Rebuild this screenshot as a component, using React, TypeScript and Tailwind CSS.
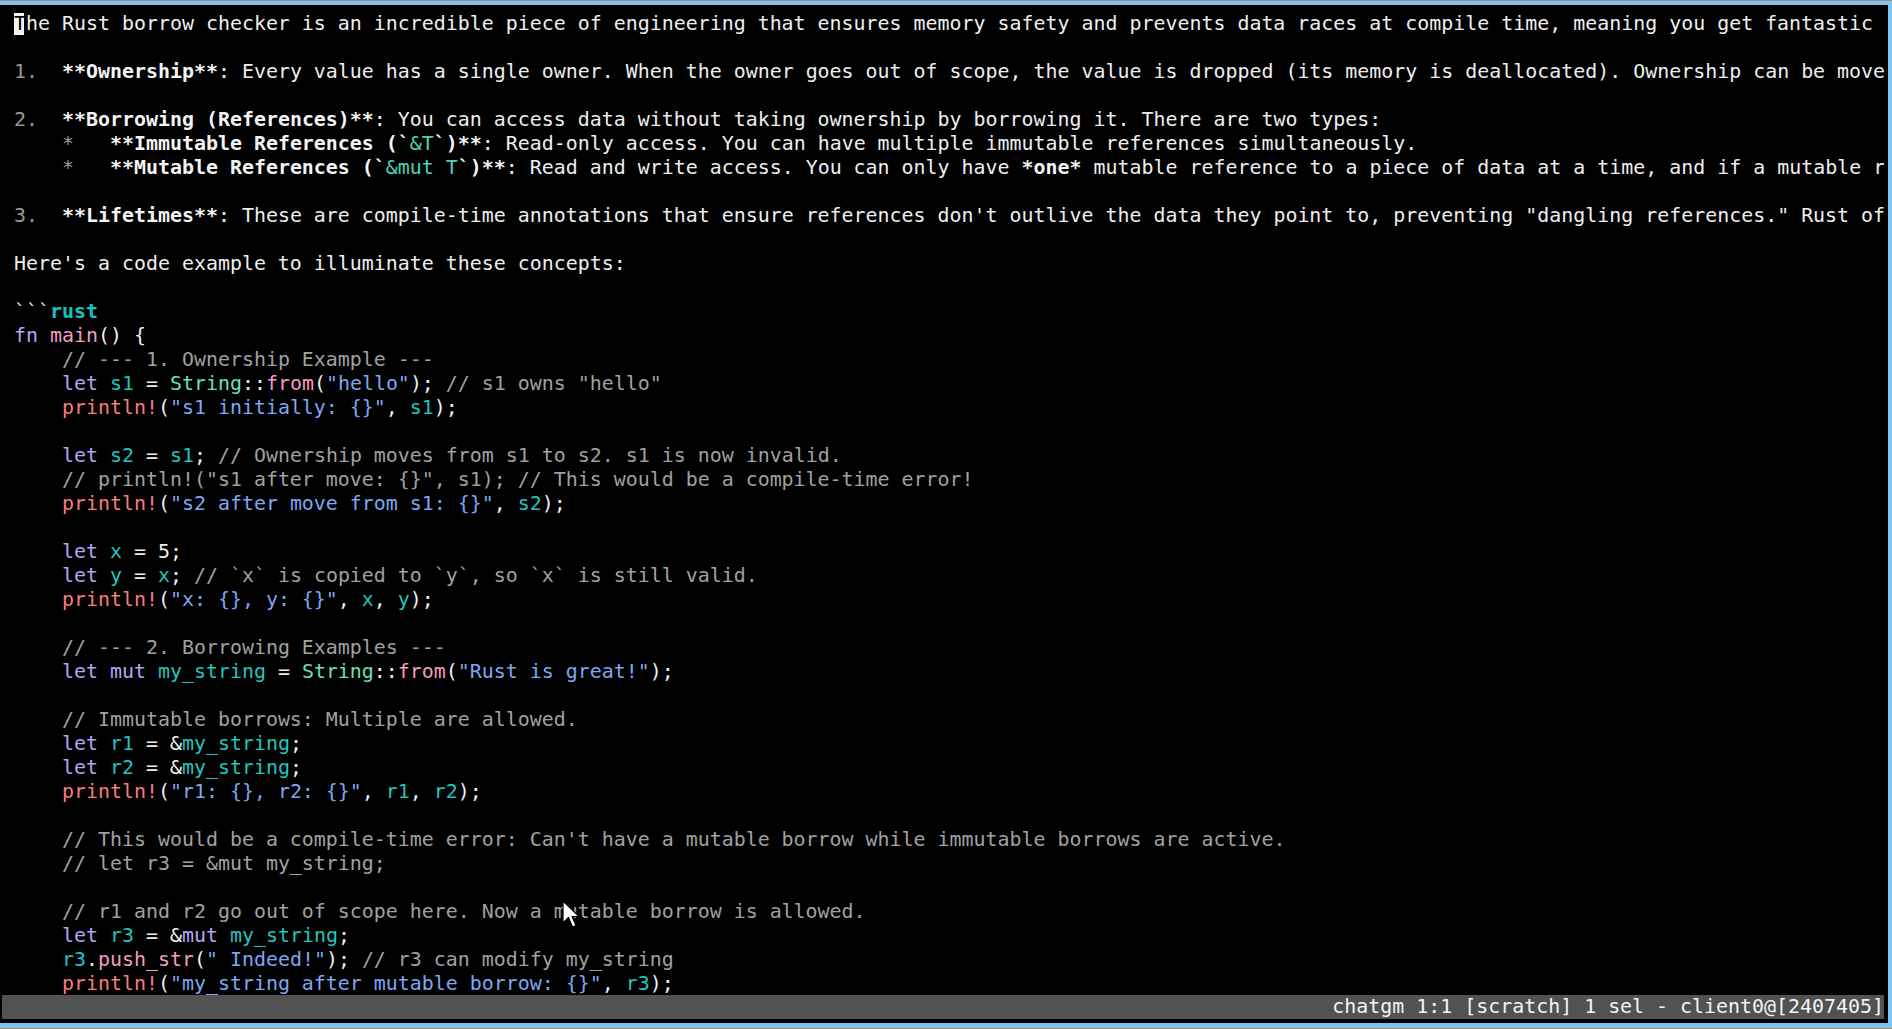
import React from "react";

type Seg = [string, keyof typeof C] | string;

const C = {
  t: "text-[#eeeeee]",
  g: "text-[#9a9a9a]",
  b: "font-bold text-[#f4f4f4]",
  tl: "text-[#4fd1b6]",
  kw: "text-[#b8a4f6]",
  v: "text-[#1fc4c0]",
  ty: "text-[#6be0b3]",
  fn: "text-[#f39bc2]",
  s: "text-[#7fa6f3]",
  c: "text-[#a0a0a0]",
  m: "text-[#f67b7b]",
  rs: "font-bold text-[#14c4c4]",
};

const lines: Seg[][] = [
  [
    ["The Rust borrow checker is an incredible piece of engineering that ensures memory safety and prevents data races at compile time, meaning you get fantastic performance without a garbage collector.", "t"],
  ],
  [],
  [
    ["1.", "g"],
    "  ",
    ["**Ownership**", "b"],
    ": Every value has a single owner. When the owner goes out of scope, the value is dropped (its memory is deallocated). Ownership can be moved from one variable to another.",
  ],
  [],
  [
    ["2.", "g"],
    "  ",
    ["**Borrowing (References)**", "b"],
    ": You can access data without taking ownership by borrowing it. There are two types:",
  ],
  [
    "    ",
    ["*", "g"],
    "   ",
    ["**Immutable References (`", "b"],
    ["&T", "tl"],
    ["`)**", "b"],
    ": Read-only access. You can have multiple immutable references simultaneously.",
  ],
  [
    "    ",
    ["*", "g"],
    "   ",
    ["**Mutable References (`", "b"],
    ["&mut T", "tl"],
    ["`)**", "b"],
    ": Read and write access. You can only have ",
    ["*one*", "b"],
    " mutable reference to a piece of data at a time, and if a mutable reference exists, no immutable references can exist.",
  ],
  [],
  [
    ["3.", "g"],
    "  ",
    ["**Lifetimes**", "b"],
    ': These are compile-time annotations that ensure references don\'t outlive the data they point to, preventing "dangling references." Rust often infers lifetimes automatically.',
  ],
  [],
  ["Here's a code example to illuminate these concepts:"],
  [],
  ["```", ["rust", "rs"]],
  [["fn", "kw"], " ", ["main", "fn"], "() {"],
  ["    ", ["// --- 1. Ownership Example ---", "c"]],
  [
    "    ",
    ["let", "kw"],
    " ",
    ["s1", "v"],
    " = ",
    ["String", "ty"],
    "::",
    ["from", "fn"],
    "(",
    ['"hello"', "s"],
    "); ",
    ['// s1 owns "hello"', "c"],
  ],
  ["    ", ["println!", "m"], "(", ['"s1 initially: {}"', "s"], ", ", ["s1", "v"], ");"],
  [],
  [
    "    ",
    ["let", "kw"],
    " ",
    ["s2", "v"],
    " = ",
    ["s1", "v"],
    "; ",
    ["// Ownership moves from s1 to s2. s1 is now invalid.", "c"],
  ],
  ["    ", ['// println!("s1 after move: {}", s1); // This would be a compile-time error!', "c"]],
  ["    ", ["println!", "m"], "(", ['"s2 after move from s1: {}"', "s"], ", ", ["s2", "v"], ");"],
  [],
  ["    ", ["let", "kw"], " ", ["x", "v"], " = 5;"],
  [
    "    ",
    ["let", "kw"],
    " ",
    ["y", "v"],
    " = ",
    ["x", "v"],
    "; ",
    ["// `x` is copied to `y`, so `x` is still valid.", "c"],
  ],
  [
    "    ",
    ["println!", "m"],
    "(",
    ['"x: {}, y: {}"', "s"],
    ", ",
    ["x", "v"],
    ", ",
    ["y", "v"],
    ");",
  ],
  [],
  ["    ", ["// --- 2. Borrowing Examples ---", "c"]],
  [
    "    ",
    ["let", "kw"],
    " ",
    ["mut", "kw"],
    " ",
    ["my_string", "v"],
    " = ",
    ["String", "ty"],
    "::",
    ["from", "fn"],
    "(",
    ['"Rust is great!"', "s"],
    ");",
  ],
  [],
  ["    ", ["// Immutable borrows: Multiple are allowed.", "c"]],
  ["    ", ["let", "kw"], " ", ["r1", "v"], " = &", ["my_string", "v"], ";"],
  ["    ", ["let", "kw"], " ", ["r2", "v"], " = &", ["my_string", "v"], ";"],
  [
    "    ",
    ["println!", "m"],
    "(",
    ['"r1: {}, r2: {}"', "s"],
    ", ",
    ["r1", "v"],
    ", ",
    ["r2", "v"],
    ");",
  ],
  [],
  [
    "    ",
    ["// This would be a compile-time error: Can't have a mutable borrow while immutable borrows are active.", "c"],
  ],
  ["    ", ["// let r3 = &mut my_string;", "c"]],
  [],
  ["    ", ["// r1 and r2 go out of scope here. Now a mutable borrow is allowed.", "c"]],
  ["    ", ["let", "kw"], " ", ["r3", "v"], " = &", ["mut", "kw"], " ", ["my_string", "v"], ";"],
  [
    "    ",
    ["r3", "v"],
    ".",
    ["push_str", "fn"],
    "(",
    ['" Indeed!"', "s"],
    "); ",
    ["// r3 can modify my_string", "c"],
  ],
  [
    "    ",
    ["println!", "m"],
    "(",
    ['"my_string after mutable borrow: {}"', "s"],
    ", ",
    ["r3", "v"],
    ");",
  ],
];

function Line({ segs, first }: { segs: Seg[]; first?: boolean }) {
  return (
    <div className="h-[24px] leading-[24px] whitespace-pre relative">
      {first && (
        <span className="absolute left-0 top-[1px] h-[22px] w-[10px] bg-[#f4f4f4]" />
      )}
      {segs.map((s, i) => {
        if (typeof s === "string") {
          return (
            <span key={i} className={C.t}>
              {s}
            </span>
          );
        }
        if (first && i === 0) {
          return (
            <span key={i} className={C[s[1]]}>
              <span className="relative text-black">{s[0][0]}</span>
              {s[0].slice(1)}
            </span>
          );
        }
        return (
          <span key={i} className={C[s[1]]}>
            {s[0]}
          </span>
        );
      })}
    </div>
  );
}

export default function App() {
  return (
    <div
      className="w-[1892px] h-[1029px] bg-black flex flex-col overflow-hidden"
      style={{ fontFamily: "'DejaVu Sans Mono', 'Liberation Mono', monospace" }}
    >
      <div className="h-[1px] bg-[#a88a68] shrink-0" />
      <div className="h-[4px] bg-[#7cc4f4] shrink-0" />
      <div className="flex-1 flex min-h-0">
        <div className="flex-1 flex flex-col pl-[2px] pr-[4px] min-w-0">
          <div className="flex-1 min-h-0 pt-[7px] pl-[12px] overflow-x-clip text-[19.93px] relative">
            {lines.map((l, i) => (
              <Line key={i} segs={l} first={i === 0} />
            ))}
            <svg
              className="absolute left-[560px] top-[895px]"
              width="19"
              height="30"
              viewBox="0 0 19 30"
            >
              <path
                d="M1 1 L1 23 L6.5 17.5 L10.5 27 L14 25.5 L10 16.5 L17 16.5 Z"
                fill="#ffffff"
                stroke="#000000"
                strokeWidth="1.2"
                strokeLinejoin="round"
              />
            </svg>
          </div>
          <div className="relative z-10 h-[24px] shrink-0 bg-[#525252] flex justify-end items-center pr-0 text-[19.93px] leading-[24px] text-[#f4f4f4] whitespace-pre">
            chatgm 1:1 [scratch] 1 sel - client0@[2407405]
          </div>
          <div className="relative z-10 h-[4px] shrink-0 bg-black" />
        </div>
        <div className="w-[4px] bg-[#7cc4f4] shrink-0" />
      </div>
      <div className="h-[5px] bg-[#7cc4f4] shrink-0" />
      <div className="h-[1px] bg-[#a88a68] shrink-0" />
    </div>
  );
}
